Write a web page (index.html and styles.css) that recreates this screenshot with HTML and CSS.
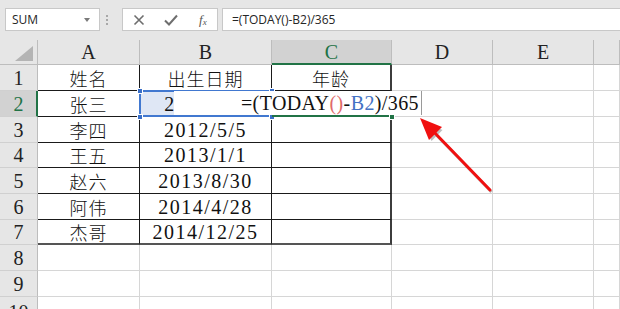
FILE: index.html
```html
<!DOCTYPE html>
<html lang="zh">
<head>
<meta charset="utf-8">
<link rel="stylesheet" href="styles.css">
</head>
<body>
<div class="toolbar">
  <div class="namebox"><span>SUM</span><span class="dd"></span></div>
  <div class="grip"><i></i><i></i><i></i></div>
  <div class="fbtns">
    <svg class="ic-x" width="12" height="12" viewBox="0 0 12 12"><path d="M1.5 1.5 L10.5 10.5 M10.5 1.5 L1.5 10.5" stroke="#6e6e6e" stroke-width="1.6" fill="none"/></svg>
    <svg class="ic-ok" width="14" height="12" viewBox="0 0 14 12"><path d="M1 6.5 L5 10.5 L13 1.5" stroke="#6e6e6e" stroke-width="2" fill="none"/></svg>
    <span class="fx">f<sub>x</sub></span>
  </div>
  <div class="fbar">=(TODAY()-B2)/365</div>
</div>
<div class="sheet">
  <div class="cell ch corner"></div>
  <div class="cell ch">A</div>
  <div class="cell ch">B</div>
  <div class="cell ch sel">C</div>
  <div class="cell ch">D</div>
  <div class="cell ch">E</div>
  <div class="cell ch"></div>

  <div class="cell rh">1</div>
  <div class="cell tb zh">姓名</div>
  <div class="cell tb zh">出生日期</div>
  <div class="cell tb r zh">年龄</div>
  <div class="cell"></div><div class="cell"></div><div class="cell"></div>

  <div class="cell rh rsel">2</div>
  <div class="cell tb zh">张三</div>
  <div class="cell tb d ref">2011/8/8</div>
  <div class="cell tb r"></div>
  <div class="cell"></div><div class="cell"></div><div class="cell"></div>

  <div class="cell rh">3</div>
  <div class="cell tb zh">李四</div>
  <div class="cell tb d">2012/5/5</div>
  <div class="cell tb r"></div>
  <div class="cell"></div><div class="cell"></div><div class="cell"></div>

  <div class="cell rh">4</div>
  <div class="cell tb zh">王五</div>
  <div class="cell tb d">2013/1/1</div>
  <div class="cell tb r"></div>
  <div class="cell"></div><div class="cell"></div><div class="cell"></div>

  <div class="cell rh">5</div>
  <div class="cell tb zh">赵六</div>
  <div class="cell tb d">2013/8/30</div>
  <div class="cell tb r"></div>
  <div class="cell"></div><div class="cell"></div><div class="cell"></div>

  <div class="cell rh">6</div>
  <div class="cell tb zh">阿伟</div>
  <div class="cell tb d">2014/4/28</div>
  <div class="cell tb r"></div>
  <div class="cell"></div><div class="cell"></div><div class="cell"></div>

  <div class="cell rh">7</div>
  <div class="cell tb b zh">杰哥</div>
  <div class="cell tb b d">2014/12/25</div>
  <div class="cell tb b r"></div>
  <div class="cell"></div><div class="cell"></div><div class="cell"></div>

  <div class="cell rh">8</div>
  <div class="cell"></div><div class="cell"></div><div class="cell"></div><div class="cell"></div><div class="cell"></div><div class="cell"></div>

  <div class="cell rh">9</div>
  <div class="cell"></div><div class="cell"></div><div class="cell"></div><div class="cell"></div><div class="cell"></div><div class="cell"></div>

  <div class="cell rh last">10</div>
  <div class="cell"></div><div class="cell"></div><div class="cell"></div><div class="cell"></div><div class="cell"></div><div class="cell"></div>

  <div class="refbox"></div>
  <div class="hnd hb h1"></div>
  <div class="hnd hb h2"></div>
  <div class="hnd hb h3"></div>
  <div class="hnd hb h4"></div>
  <div class="editor">=(TODAY<span class="pr">()</span>-<span class="bl">B2</span>)/365</div>
  <div class="activebot"></div>
  <div class="hnd hg"></div>
</div>
<svg class="arrow" width="620" height="309" viewBox="0 0 620 309">
  <g opacity="0.25" transform="translate(1.5,2)">
    <line x1="490" y1="190" x2="432" y2="130" stroke="#000" stroke-width="3"/>
    <polygon points="420,118 441,128 430,139" fill="#000"/>
  </g>
  <line x1="490" y1="190" x2="432" y2="130" stroke="#f01010" stroke-width="3" stroke-linecap="round"/>
  <polygon points="420,118 442,127 429,140" fill="#f01010"/>
</svg>
</body>
</html>
```
FILE: styles.css
```css
* { box-sizing: border-box; margin: 0; padding: 0; }
body {
  width: 620px;
  height: 309px;
  overflow: hidden;
  position: relative;
  background: #e6e6e6;
  font-family: "Liberation Serif", "Noto Sans CJK SC", serif;
  color: #111;
}
.toolbar {
  height: 40px;
  display: flex;
  align-items: flex-start;
  padding: 8px 0 0 5px;
  background: #e6e6e6;
  font-family: "Open Sans", "Noto Sans", sans-serif;
}
.namebox {
  position: relative;
  width: 95px;
  height: 23px;
  background: #fff;
  border: 1px solid #c8c8c8;
  display: flex;
  align-items: center;
  padding-left: 6px;
  font-size: 12px;
  color: #262626;
}
.dd {
  position: absolute;
  right: 9px;
  top: 9px;
  width: 0;
  height: 0;
  border-left: 3.5px solid transparent;
  border-right: 3.5px solid transparent;
  border-top: 4px solid #7a7a7a;
}
.grip {
  width: 22px;
  height: 23px;
  display: flex;
  flex-direction: column;
  justify-content: center;
  gap: 2px;
  padding-left: 6px;
}
.grip i {
  display: block;
  width: 2px;
  height: 2px;
  background: #a8a8a8;
}
.fbtns {
  width: 96px;
  height: 23px;
  background: #fff;
  border: 1px solid #c8c8c8;
  margin-right: 4px;
  display: flex;
  align-items: center;
  padding-left: 10px;
}
.ic-ok { margin-left: 19px; }
.fx {
  margin-left: 21px;
  font-family: "Liberation Serif", serif;
  font-style: italic;
  font-size: 13px;
  color: #555;
}
.fx sub { font-size: 9px; vertical-align: -1px; }
.fbar {
  flex: 1;
  height: 23px;
  background: #fff;
  border: 1px solid #c8c8c8;
  border-right: none;
  padding-left: 9px;
  display: flex;
  align-items: center;
  font-size: 12px;
  color: #262626;
}
.sheet {
  position: relative;
  display: grid;
  grid-template-columns: 38px 102px 132px 120px 101px 101px 26px;
  grid-template-rows: 25px 26px 26px 26px 25px 26px 26px 25px 26px 26px 13px;
  background: #fff;
}
.cell {
  border-right: 1px solid #d6d6d6;
  border-bottom: 1px solid #d6d6d6;
  display: flex;
  align-items: flex-end;
  justify-content: center;
  font-size: 20px;
  line-height: 1;
  padding-bottom: 2px;
  overflow: hidden;
  white-space: nowrap;
}
.ch {
  background: #e6e6e6;
  border-right-color: #bdbdbd;
  border-bottom-color: #bdbdbd;
  color: #222;
  padding-bottom: 2px;
}
.ch.sel {
  background: #d2d2d2;
  color: #217346;
  border-bottom: 2px solid #217346;
  padding-bottom: 1px;
}
.corner { position: relative; }
.corner::after {
  content: "";
  position: absolute;
  right: 4px;
  bottom: 3px;
  width: 18px;
  height: 15px;
  background: #b4b4b4;
  clip-path: polygon(100% 0, 100% 100%, 0 100%);
}
.rh {
  background: #e6e6e6;
  border-right-color: #bdbdbd;
  border-bottom-color: #d0d0d0;
  color: #222;
}
.rh.rsel {
  background: #d2d2d2;
  color: #217346;
  border-right: 2px solid #217346;
  padding-left: 1px;
}
.rh.last {
  align-items: flex-start;
  padding-top: 5px;
  padding-bottom: 0;
  border-bottom: none;
}
.tb {
  border-right-color: #1a1a1a;
  border-bottom-color: #1a1a1a;
}
.tb.r { border-right: 2px solid #3c3c3c; }
.tb.b { border-bottom: 2px solid #555; padding-bottom: 1px; }
.zh {
  font-family: "Noto Sans CJK SC", sans-serif;
  font-weight: 300;
  font-size: 18px;
  letter-spacing: 1px;
  padding-bottom: 3px;
}
.zh.b { padding-bottom: 2px; }
.d { letter-spacing: 1.5px; }
.ref { background: #dfe7f5; }
.refbox {
  position: absolute;
  left: 139px;
  top: 50px;
  width: 133px;
  height: 27px;
  border: 2px solid #4178d0;
}
.hnd {
  position: absolute;
  width: 5px;
  height: 5px;
}
.hb { background: #3a6fc8; border: 1px solid #fff; width: 6px; height: 6px; }
.h1 { left: 137px; top: 48px; }
.h2 { left: 137px; top: 74px; }
.h3 { left: 269px; top: 48px; }
.h4 { left: 269px; top: 74px; }
.editor {
  position: absolute;
  left: 174px;
  top: 51px;
  width: 248px;
  height: 24px;
  background: #fff;
  border-right: 1px solid #9a9a9a;
  display: flex;
  align-items: flex-end;
  justify-content: flex-end;
  padding: 0 2px 2px 0;
  font-size: 20px;
  line-height: 1;
  letter-spacing: 0.4px;
  color: #111;
  white-space: nowrap;
}
.pr { color: #e06a6a; }
.bl { color: #4472c4; }
.activebot {
  position: absolute;
  left: 272px;
  top: 75px;
  width: 119px;
  height: 2px;
  background: #217346;
}
.hg {
  left: 389px;
  top: 74px;
  background: #217346;
  border: 1px solid #fff;
  width: 6px;
  height: 6px;
}
.arrow {
  position: absolute;
  left: 0;
  top: 0;
  pointer-events: none;
}
```
